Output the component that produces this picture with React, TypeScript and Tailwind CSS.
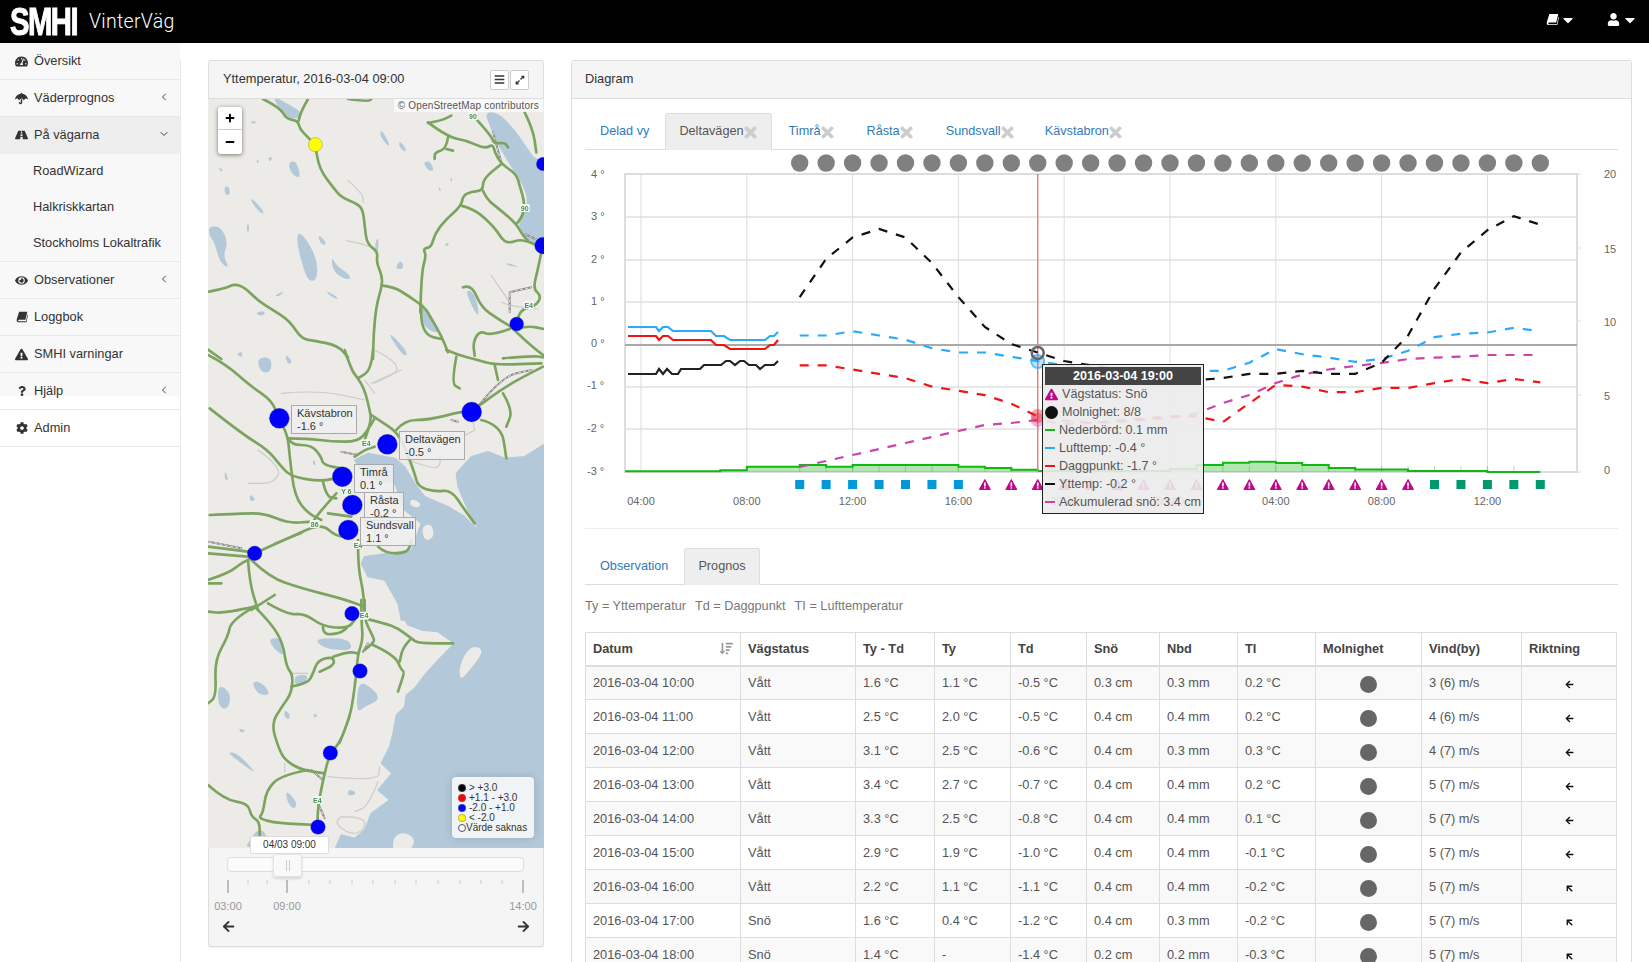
import React from "react";
import { ChevronLeft, ChevronDown } from "lucide-react";
import { FaTachometerAlt, FaUmbrella, FaRoad, FaEye, FaExclamationTriangle, FaQuestion, FaCog, FaUser, FaBars, FaExpandAlt, FaArrowLeft, FaArrowRight, FaSortAmountDown, FaCaretDown, FaTimes, FaPlus, FaMinus } from "react-icons/fa";

const X = (h: number) => 641 + 26.45 * (h - 4);
const Y = (v: number) => 344 - 42.6 * v;
const pts = (a: number[]) => { let s = ""; for (let i = 0; i < a.length; i += 2) s += (i ? " L" : "M") + a[i] + " " + a[i + 1]; return s; };
const smooth = (a: number[]) => {
  if (a.length < 6) return pts(a);
  let s = `M${a[0]} ${a[1]}`;
  for (let i = 2; i < a.length - 2; i += 2) s += ` Q${a[i]} ${a[i + 1]} ${(a[i] + a[i + 2]) / 2} ${(a[i + 1] + a[i + 3]) / 2}`;
  return s + ` L${a[a.length - 2]} ${a[a.length - 1]}`;
};
const smoothClosed = (a: number[]) => {
  const n = a.length;
  const m = (i: number) => [(a[i % n] + a[(i + 2) % n]) / 2, (a[(i + 1) % n] + a[(i + 3) % n]) / 2];
  let [x, y] = m(n - 2);
  let s = `M${x} ${y}`;
  for (let i = 0; i < n; i += 2) { [x, y] = m(i); s += ` Q${a[i]} ${a[i + 1]} ${x} ${y}`; }
  return s + " Z";
};
const seq = (vals: number[], f: (v: number) => number) => vals.map((v, i) => (i ? "L" : "M") + X(10 + i) + " " + f(v)).join(" ");

const yt = [1.1, 2.0, 2.5, 2.7, 2.5, 1.9, 1.1, 0.4, 0, -0.2, -0.4, -0.5, -0.6, -0.7, -0.8, -0.85, -0.8, -0.7, -0.7, -0.63, -0.7, -0.7, -0.44, 0.2, 1.3, 2.15, 2.67, 3.0, 2.8];
const lu = [0.2, 0.2, 0.3, 0.2, 0.1, -0.1, -0.2, -0.2, -0.3, -0.4, -0.5, -0.55, -0.6, -0.65, -0.65, -0.63, -0.63, -0.44, -0.12, -0.24, -0.32, -0.42, -0.35, -0.16, 0.16, 0.24, 0.27, 0.38, 0.3];
const da = [-0.5, -0.5, -0.6, -0.7, -0.8, -1.0, -1.1, -1.2, -1.4, -1.7, -1.8, -1.85, -1.8, -1.75, -1.7, -1.7, -1.83, -1.39, -0.96, -1.0, -1.13, -1.13, -1.03, -1.03, -0.92, -0.82, -0.92, -0.82, -0.9];
const sn = [467, 461, 455, 449, 443, 437, 431, 425, 423, 420, 424, 423, 422, 420, 418, 413.5, 403, 395, 383, 374.6, 369.5, 366, 363, 359, 357.6, 356.6, 355, 355, 355];
const steps: number[][] = [[3.4, 7, 471.3], [7, 8, 470.3], [8, 10, 466.7], [10, 11, 465], [11, 12, 466.7], [12, 16, 465], [16, 17, 466.7], [17, 18, 468], [18, 19, 469.7], [19, 24, 471], [24, 25, 469], [25, 26, 465], [26, 27, 462.7], [27, 28, 461.7], [28, 29, 463], [29, 30, 465], [30, 31, 468], [31, 33, 469.5], [33, 36, 471], [36, 38, 472]];
const hours = Array.from({ length: 29 }, (_, i) => 10 + i);

const roadsA: number[][] = [
  [165,0,215,25,235,60,270,65,275,90,300,115,322,138,330,190,345,225,375,265,400,295,450,315,465,335,470,380,477,435,510,458,505,490,522,530,522,560,505,620,497,700,495,780],
  [300,0,280,35,272,65],[420,0,480,8,490,0],
  [3,578,50,568,80,555,110,565,150,605,190,630,245,665,280,720,320,725,390,740,420,775],
  [0,752,40,780],
  [525,560,560,565,600,590,650,625,665,650,700,710,720,760],
  [640,620,637,660,655,710,700,720],
  [637,640,640,520,655,470,645,448,670,445,680,405,710,365,760,320,765,290,790,278,825,275,825,240,880,195],
  [760,320,800,330,860,385,885,425,905,432,940,420,990,440],
  [825,275,835,300,880,335,925,375,945,410,960,425],
  [660,70,720,115,780,125,830,150,855,135,860,160,880,195,925,225,935,260,950,310,945,350,925,375],
  [720,115,715,150,680,160,680,180],[715,150,735,155],
  [660,72,700,65,730,50],
  [800,55,850,110,858,135,890,130,900,145],
  [950,40,975,90,985,160],
  [1000,460,990,510,975,570,1000,590,985,620,940,630,925,670],
  [765,565,790,555,820,625,870,660,905,680,920,695,975,745,1008,770],
  [905,690,850,710,815,695,795,730,800,770],
  [925,690,960,680,1008,690],[885,778,970,770,1008,775],
];
const roadsB: number[][] = [
  [0,15,50,40,130,110,190,150,214,205,240,260,245,320,260,440,300,490,340,510],
  [5,175,100,250,180,300,220,350,250,380,340,395,400,380],
  [410,0,430,60,450,85,470,120,485,180,490,210,470,270],
  [240,265,250,285,310,285,340,320,345,345,400,355],
  [495,0,490,60,450,85],
  [490,195,520,215,565,245,590,290,620,370,630,410,680,425,730,420,770,480,800,520],
  [240,265,300,265,370,275,450,275,480,240,500,205],
  [565,240,590,210,660,210,760,185,790,185,890,110,1005,50],
  [820,210,880,225,895,325],[885,130,915,180,895,230],
  [715,0,750,15,810,30,860,45,1000,40],
  [745,20,730,100,755,115],[860,45,870,90],
  [345,395,355,440,385,445],
  [5,495,100,490,170,490,240,520,310,515],
  [140,610,250,560,340,520,385,560,430,560],
  [385,430,340,480,315,515],[360,490,430,500],
  [450,570,450,650,465,720,470,780],
  [0,590,120,605],[0,610,120,620],
  [120,630,125,700,150,780],[120,620,180,680,280,715,400,745,470,770],
  [0,690,60,670,100,640,120,630],[130,780,200,735],[0,700,40,700],
  [510,590,530,610,600,610,610,570],
  [440,320,470,300,500,290],
];
const roadsC: number[][] = [
  [460,0,460,60,465,120,450,160,445,220,435,300,425,350,395,430,365,460,345,540,330,620,328,680],
  [470,0,465,50,495,110,500,125,470,150],
  [470,55,530,70,570,85,610,115,630,130,735,130],
  [495,135,560,165,580,210,590,215,570,275],[610,115,585,140,575,185],
  [140,20,190,70,225,130,235,200,255,225,250,280,225,315,190,370,210,440,230,480,280,510,350,520],
  [140,20,70,60,60,110,20,180,25,290,0,310],[140,20,50,40,0,35],
  [180,10,240,45,290,40,345,80,420,85,440,60],
  [345,80,345,105,395,100,415,85],
  [250,260,300,250,315,220,330,180,375,170,380,195,335,215],
  [375,170,420,155,450,160],
  [300,510,220,525,175,570,165,640,150,655,210,670,330,675],
  [0,555,50,600,120,610,130,650,155,665,155,710],
];
const grayA: number[][] = [[415,425,470,435,510,455],[850,530,905,610],[420,245,465,285,465,310],[880,610,900,620,990,630]];
const grayB: number[][] = [[500,0,600,50,500,100],[220,130,330,120,470,150],[470,90,500,130],[600,330,680,360,700,340,690,300,800,240],[800,240,790,190],[580,60,490,100],[150,300,220,350,200,400,120,400]];
const grayC: number[][] = [[230,490,230,515],[360,530,510,545,515,500],[400,650,470,650,470,690,430,705,380,670,400,650],[510,545,480,620,440,635],[250,220,300,220]];
const darkA: number[][] = [[855,100,880,190],[950,405,1005,430],[905,580,970,565],[905,585,905,640]];
const darkB: number[][] = [[3,575,100,595],[200,580,280,550],[810,170,880,80,970,60],[400,305,450,315],[730,210,750,215]];
const darkC: number[][] = [[425,350,395,430],[480,130,465,155],[310,510,345,540],[335,620,350,655]];

const lakesA: number[][] = [
  [240,190,265,185,280,240,250,225],[265,410,280,400,325,470,330,540,300,550,275,470],[370,470,385,500,430,530,420,545,375,520],[330,405,355,430,350,440,335,430],
  [50,260,65,265,65,290,50,285],[3,380,40,385,60,430,45,470,65,510,35,490,20,430,3,410],[130,295,170,340,160,345,130,310],[145,182,155,185,148,195],[180,175,195,175,185,190],
  [520,90,545,135,540,142,515,110],[575,125,595,150,590,160,572,140],[645,190,665,185,680,215,660,215],[355,575,390,595,385,602,360,585],[198,590,230,575,215,592],[145,640,170,635,170,648,150,650],
  [560,510,578,480,590,510],[505,420,512,420,510,460,500,450],[640,600,655,640,700,700,670,700,640,670],[770,570,800,580,815,650,800,640],[545,700,600,760,590,775,550,720],[30,205,45,210,40,220],[120,365,125,400,115,395],[725,235,735,240,730,250],[690,262,700,270,695,280],[715,430,725,435,710,445],[890,490,940,505,900,500],[130,65,150,70,130,75],
];
const lakesB: number[][] = [[145,25,190,20,190,65,160,70],[50,360,62,390,50,390],[125,430,145,450,125,455],[315,325,325,345,315,345],[85,10,105,5,100,25],[230,10,255,35,240,45]];
const lakesC: number[][] = [[130,245,160,245,190,285,150,285],[30,250,70,280,60,330,30,320],[320,115,420,115,435,150,375,150,340,140],[180,115,225,115,230,170,200,150],[450,240,500,270,515,300,470,320,445,340],[55,455,90,460,150,525,100,490],[235,570,270,610,255,630,235,600],[420,565,450,580,420,590],[260,225,305,225,285,255,260,255],[90,385,115,390,100,400],[315,340,330,345,320,355],[115,735,150,685,175,700,180,742,120,742],[230,330,245,340,245,360,228,350]];

const Road = ({ d, c, w, dash }: { d: number[]; c: string; w: number; dash?: string }) => (
  <path d={smooth(d)} fill="none" stroke={c} strokeWidth={w} strokeLinejoin="round" strokeLinecap="round" strokeDasharray={dash} />
);
const Lake = ({ d }: { d: number[] }) => <path d={smoothClosed(d)} fill="#b3c9d9" />;
const Shield = ({ x, y, t }: { x: number; y: number; t: string }) => (
  <g>
    <rect x={x - 15} y={y - 12} width={30} height={24} rx={4} fill="#f4f8f2" />
    <text x={x} y={y + 8} textAnchor="middle" fontSize={21} fill="#4b8f55" fontWeight="bold">{t}</text>
  </g>
);
const Pin = ({ x, y, r, c = "#0000ff" }: { x: number; y: number; r: number; c?: string }) => (
  <circle cx={x} cy={y} r={r} fill={c} stroke="#555" strokeOpacity={0.45} strokeWidth={2} />
);
const Group = ({ oy, roads, gray, dark, lakes, children }: { oy: number; roads: number[][]; gray: number[][]; dark: number[][]; lakes: number[][]; children?: React.ReactNode }) => (
  <g transform={`translate(0 ${oy}) scale(${1 / 3})`}>
    {lakes.map((l, i) => <Lake key={i} d={l} />)}
    {gray.map((l, i) => <Road key={i} d={l} c="#cdcbc5" w={3.5} />)}
    {dark.map((l, i) => <g key={i}><Road d={l} c="#888" w={6} /><Road d={l} c="#ddd" w={3} dash="8 8" /></g>)}
    {roads.map((l, i) => <Road key={i} d={l} c="#7ca45f" w={8} />)}
    {children}
  </g>
);

const seaA = [830,40,870,40,920,90,960,150,985,185,1030,175,1030,480,970,430,940,400,930,370,950,340,960,300,940,250,900,190,860,120,845,80];
const seaB = [1030,270,950,320,890,325,840,305,790,320,745,370,750,410,780,480,815,545,770,500,720,470,650,440,620,400,590,350,560,325,480,310,440,330,470,380,560,400,590,480,640,520,610,600,540,610,470,620,460,640,480,680,530,690,570,760,580,810,1030,810];
const seaC = [580,-30,580,40,600,75,640,90,690,95,740,130,700,170,650,225,620,265,595,285,590,320,565,345,555,400,545,440,520,490,552,520,510,570,545,600,490,640,470,690,440,715,400,705,375,760,1030,760,1030,-30];

const MapDrawing = () => (
  <svg width={336} height={749} viewBox="0 0 336 749" className="block w-[336px] h-[749px] bg-[#ecebe7] blur-[0.35px]">
    <g transform={`scale(${1 / 3})`}>
      <path d={smoothClosed([195,-10,250,20,280,40,270,60,235,55,210,25])} fill="#b3c9d9" />
      <path d={smoothClosed(seaA)} fill="#b3c9d9" />
    </g>
    <g transform={`translate(0 251) scale(${1 / 3})`}>
      <path d={pts(seaB) + " Z"} fill="#b3c9d9" stroke="#b3c9d9" strokeWidth={4} strokeLinejoin="round" />
      <path d={smoothClosed([610,445,640,460,630,475,605,465])} fill="#ecebe7" />
      <path d={smoothClosed([640,530,670,520,680,560,650,575])} fill="#ecebe7" />
    </g>
    <g transform={`translate(0 501) scale(${1 / 3})`}>
      <path d={pts(seaC) + " Z"} fill="#b3c9d9" stroke="#b3c9d9" strokeWidth={4} strokeLinejoin="round" />
      <path d={smoothClosed([755,190,790,135,830,150,790,205,755,245])} fill="#ecebe7" />
      <path d={smoothClosed([555,710,590,695,625,720,600,760,555,760])} fill="#ecebe7" />
    </g>
    <Group oy={0} roads={roadsA} gray={grayA} dark={darkA} lakes={lakesA}>
      <Shield x={795} y={52} t="90" /><Shield x={950} y={327} t="90" /><Shield x={962} y={618} t="E4" />
      <Pin x={1005} y={195} r={20} /><Pin x={1005} y={440} r={25} /><Pin x={926} y={675} r={21} /><Pin x={322} y={137} r={21} c="#ffff00" />
    </Group>
    <Group oy={251} roads={roadsB} gray={grayB} dark={darkB} lakes={lakesB}>
      <Shield x={475} y={280} t="E4" /><Shield x={320} y={522} t="86" /><Shield x={450} y={585} t="E4" /><Shield x={415} y={425} t="Y 6" />
      <Pin x={214} y={205} r={30} /><Pin x={538} y={283} r={30} /><Pin x={791} y={186} r={30} /><Pin x={403} y={380} r={30} /><Pin x={433} y={465} r={30} /><Pin x={421} y={540} r={30} /><Pin x={140} y={610} r={22} />
    </Group>
    <Group oy={501} roads={roadsC} gray={grayC} dark={darkC} lakes={lakesC}>
      <Shield x={468} y={47} t="E4" /><Shield x={328} y={600} t="E4" />
      <Pin x={432} y={41} r={22} /><Pin x={456} y={213} r={22} /><Pin x={367} y={459} r={22} /><Pin x={330} y={681} r={22} />
    </Group>
  </svg>
);

const Book = ({ s }: { s: number }) => (
  <svg width={s} height={s} viewBox="0 0 14 14" fill="currentColor">
    <path d="M3.6 1 H13.2 L11 10.2 H3.4 C2.2 10.2 2.2 12 3.4 12 H11.6 L13.4 4 L14 4.6 L12.2 13 H3 C1.2 13 .4 11.4 .9 9.6 Z" />
  </svg>
);

const MapLabel = ({ cls, name, val }: { cls: string; name: string; val: string }) => (
  <div className={`absolute h-[29px] border border-[#aaa] bg-[#f0f0f0]/85 pl-[5px] text-[11px] leading-[13px] text-[#333] pt-px ${cls}`}>
    <div>{name}</div><div>{val}</div>
  </div>
);

const LegendRow = ({ c, t }: { c: string; t: string }) => (
  <div className="flex items-center h-[10px]">
    <span className={`w-2 h-2 rounded-full mr-[3px] border border-[#777]/50 ${c}`} /><span>{t}</span>
  </div>
);

const MapPanel = () => (
  <div className="w-[336px] h-[887px] border border-[#ddd] rounded-[3px] bg-[#f5f5f5] shadow-[0_1px_1px_rgba(0,0,0,0.05)] flex flex-col shrink-0">
    <div className="h-[38px] flex items-center justify-between border-b border-[#ddd] pl-[14px] pr-[14px] shrink-0">
      <span className="text-[12.8px] text-[#333] pb-[2px]">Yttemperatur, 2016-03-04 09:00</span>
      <div className="flex gap-px">
        <span className="w-[19px] h-[20px] border border-[#ccc] bg-white rounded-[2px] flex items-center justify-center text-[#333]"><FaBars size={11} /></span>
        <span className="w-[19px] h-[20px] border border-[#ccc] bg-white rounded-[2px] flex items-center justify-center text-[#333]"><FaExpandAlt size={10} /></span>
      </div>
    </div>
    <div className="relative h-[749px] shrink-0 -mx-px overflow-hidden">
      <MapDrawing />
      <div className="absolute top-0 right-[1px] bg-white/70 px-[4px] text-[10px] leading-[13px] tracking-[0.2px] text-[#555]">© OpenStreetMap contributors</div>
      <div className="absolute left-[10px] top-[8px] w-[24px] h-[47px] bg-white rounded-[3px] shadow-[0_1px_4px_rgba(0,0,0,0.5)] flex flex-col text-black">
        <span className="h-[23px] flex items-center justify-center border-b border-[#ccc]"><FaPlus size={10} /></span>
        <span className="h-[24px] flex items-center justify-center"><FaMinus size={10} /></span>
      </div>
      <MapLabel cls="left-[83px] top-[306px] w-[66px]" name="Kävstabron" val="-1.6 °" />
      <MapLabel cls="left-[191px] top-[332px] w-[66px]" name="Deltavägen" val="-0.5 °" />
      <MapLabel cls="left-[146px] top-[365px] w-[40px]" name="Timrå" val="0.1 °" />
      <MapLabel cls="left-[156px] top-[393px] w-[40px]" name="Råsta" val="-0.2 °" />
      <MapLabel cls="left-[152px] top-[418px] w-[56px]" name="Sundsvall" val="1.1 °" />
      <div className="absolute left-[244px] top-[678px] w-[82px] h-[61px] bg-[#f1f4f7] rounded-[4px] shadow-[0_0_10px_rgba(0,0,0,0.15)] pl-[6px] pt-[6px] text-[10px] text-[#333] leading-[10px]">
        <LegendRow c="bg-black" t="> +3.0" />
        <LegendRow c="bg-[#ff0000]" t="+1.1 - +3.0" />
        <LegendRow c="bg-[#0000ff]" t="-2.0 - +1.0" />
        <LegendRow c="bg-[#ffff00]" t="< -2.0" />
        <div className="flex items-center h-[10px]"><span className="w-2 h-2 rounded-full border border-[#555] bg-white/20" /><span>Värde saknas</span></div>
      </div>
    </div>
    <div className="relative flex-1 -mx-px">
      <div className="absolute left-[42px] -top-[12px] w-[79px] h-[18px] bg-white border border-[#ddd] rounded-[2px] text-[10px] leading-[16px] text-center text-[#333] z-10">04/03 09:00</div>
      <div className="relative ml-[19px] mt-[9px] w-[297px] h-[15px] bg-[#fbfbfb] border border-[#ddd] rounded-[4px]">
        <div className="absolute left-[45px] -top-[4px] w-[29px] h-[23px] bg-[#f9f9f9] border border-[#e4e4e4] rounded-[3px] shadow-[0_2px_3px_rgba(0,0,0,0.12)] flex items-center justify-center gap-[2px]">
          <span className="w-px h-[11px] bg-[#ccc]" /><span className="w-px h-[11px] bg-[#ccc]" />
        </div>
      </div>
      <svg width={336} height={46} viewBox="0 0 336 46" className="block mt-[8px]">
        {[40, 59, 101, 122, 144, 165, 187, 208, 230, 252, 273, 294].map((x) => <line key={x} x1={x} x2={x} y1={0} y2={4} stroke="#ccc" />)}
        {[20, 79, 315].map((x) => <line key={x} x1={x} x2={x} y1={0} y2={13} stroke="#aaa" strokeWidth={1.5} />)}
        <text x={20} y={30} textAnchor="middle" fontSize={11} fill="#999">03:00</text>
        <text x={79} y={30} textAnchor="middle" fontSize={11} fill="#999">09:00</text>
        <text x={315} y={30} textAnchor="middle" fontSize={11} fill="#999">14:00</text>
      </svg>
      <div className="flex justify-between pl-[14px] pr-[14px] text-[#333] -mt-[6px]">
        <FaArrowLeft size={13} /><FaArrowRight size={13} />
      </div>
    </div>
  </div>
);

const Tab = ({ t, x, active, cls = "px-[14px] mr-[2px]" }: { t: string; x?: boolean; active?: boolean; cls?: string }) => (
  <div className={`h-[37px] -mb-px flex items-center text-[12.7px] rounded-t-[3px] border ${cls} ${active ? "bg-[#eee] border-[#ddd] border-b-[#eee] text-[#555]" : "border-transparent text-[#337ab7]"}`}>
    <span>{t}</span>
    {x && <FaTimes size={17} stroke="currentColor" strokeWidth={20} className="text-[#ccc] mt-[2px] -mx-[2px]" />}
  </div>
);

const Tri = ({ x, y }: { x: number; y: number }) => (
  <g>
    <path d={`M${x} ${y - 5.5} L${x + 5.5} ${y + 4.5} L${x - 5.5} ${y + 4.5} Z`} fill="#bb0a8c" stroke="#bb0a8c" strokeLinejoin="round" />
    <rect x={x - 0.8} y={y - 2.5} width={1.6} height={4} fill="#fff" /><rect x={x - 0.8} y={y + 2.2} width={1.6} height={1.4} fill="#fff" />
  </g>
);

const blueObs = [628,327,656,327,659,331,663,327,668,327,673,331,711,331,716,336,724,336,730,340,765,340,770,336,774,336,778,332];
const redObs = [628,336,656,336,659,340,663,336,668,336,673,340,711,340,716,345,724,345,730,349,765,349,770,345,774,345,778,340];
const blackObs = [628,374,656,374,659,369,663,374,667,369,672,374,678,374,681,369,700,369,704,365,721,365,726,361,730,361,735,365,740,361,744,361,749,365,756,365,760,369,765,365,774,365,778,361];

const Chart = () => {
  const stepD = steps.map((s, i) => (i ? "L" : "M") + Math.max(X(s[0]), 625) + " " + s[2] + " L" + X(s[1]) + " " + s[2]).join(" ");
  return (
    <svg width={1046} height={378} viewBox="585 150 1046 378" className="block w-[1046px] h-[378px]">
      {[217, 260, 302, 387, 429].map((y) => <line key={y} x1={625} x2={1577} y1={y} y2={y} stroke="#e8e8e8" strokeWidth={2} />)}
      {[4, 8, 12, 16, 20, 24, 28, 32, 36].map((h) => <line key={h} x1={X(h)} x2={X(h)} y1={174} y2={472} stroke="#ddd" />)}
      <rect x={625} y={174} width={952} height={298} fill="none" stroke="#ddd" strokeWidth={2} />
      <line x1={625} x2={1577} y1={345} y2={345} stroke="#aaa" strokeWidth={2} />
      {[174, 248, 321, 395, 472].map((y) => <line key={y} x1={1577} x2={1581} y1={y} y2={y} stroke="#ddd" />)}
      {["4 °", "3 °", "2 °", "1 °", "0 °"].map((t, i) => <text key={t} x={591} y={178 + i * 42.3} fontSize={11} fill="#666">{t}</text>)}
      {["-1 °", "-2 °", "-3 °"].map((t, i) => <text key={t} x={587} y={389 + i * 43} fontSize={11} fill="#666">{t}</text>)}
      {[["20", 178], ["15", 253], ["10", 326], ["5", 400], ["0", 474]].map(([t, y]) => <text key={t as string} x={1604} y={y as number} fontSize={11} fill="#666">{t}</text>)}
      {hours.map((h) => <circle key={h} cx={X(h)} cy={163} r={8.7} fill="#808080" />)}
      <path d={stepD + ` L${X(38)} 472 L625 472 Z`} fill="#16b616" fillOpacity={0.33} stroke="none" />
      <path d={stepD} fill="none" stroke="#11b811" strokeWidth={2} />
      {hours.slice(0, 28).map((h) => <line key={h} x1={X(h)} x2={X(h)} y1={466} y2={472} stroke="#11b811" strokeOpacity={0.35} />)}
      <line x1={X(19)} x2={X(19)} y1={174} y2={472} stroke="#d98888" strokeWidth={1.5} />
      <path d={pts(blueObs)} fill="none" stroke="#29aaff" strokeWidth={2.2} />
      <path d={pts(redObs)} fill="none" stroke="#f01414" strokeWidth={2.2} />
      <path d={pts(blackObs)} fill="none" stroke="#222" strokeWidth={2.2} />
      <path d={sn.map((y, i) => (i ? "L" : "M") + X(10 + i) + " " + y).join(" ")} fill="none" stroke="#cc44aa" strokeWidth={2.2} strokeDasharray="9 9" />
      <path d={seq(da, Y)} fill="none" stroke="#f01414" strokeWidth={2.2} strokeDasharray="9 9" />
      <path d={seq(lu, Y)} fill="none" stroke="#29aaff" strokeWidth={2.2} strokeDasharray="9 9" />
      <path d={seq(yt, Y)} fill="none" stroke="#111" strokeWidth={2.2} strokeDasharray="9 9" />
      <circle cx={X(19)} cy={361.5} r={6.5} fill="#29aaff" fillOpacity={0.3} stroke="#29aaff" strokeOpacity={0.7} strokeWidth={2} />
      <circle cx={X(19)} cy={353} r={6} fill="none" stroke="#666" strokeWidth={2.5} />
      <circle cx={X(19)} cy={420} r={7} fill="#cc44aa" fillOpacity={0.4} />
      <circle cx={X(19)} cy={416} r={7} fill="#f01414" fillOpacity={0.4} />
      {hours.map((h) => h <= 16
        ? <rect key={h} x={X(h) - 4.5} y={480} width={9} height={9} fill="#0098d8" />
        : h <= 33 ? <Tri key={h} x={X(h)} y={485} />
        : <rect key={h} x={X(h) - 4.5} y={480} width={9} height={9} fill="#00986e" />)}
      {[[4, "04:00"], [8, "08:00"], [12, "12:00"], [16, "16:00"], [20, "20:00"], [24, "00:00"], [28, "04:00"], [32, "08:00"], [36, "12:00"]].map(([h, t]) => (
        <text key={h as number} x={X(h as number)} y={505} textAnchor="middle" fontSize={11} fill="#666">{t}</text>
      ))}
    </svg>
  );
};

const TipRow = ({ icon, t }: { icon: React.ReactNode; t: string }) => (
  <div className="h-[18px] flex items-center whitespace-nowrap">{icon}<span>{t}</span></div>
);
const Swatch = ({ c }: { c: string }) => <span className={`w-[10px] h-[2px] mr-[4px] ${c}`} />;

const Tooltip = () => (
  <div className="absolute left-[457px] top-[214px] w-[162px] h-[150px] border-[1.5px] border-[#222] bg-[#ebebeb]/90 px-[2px] pt-[2px] text-[12.6px] leading-[18px] text-[#555]">
    <div className="h-[18px] bg-[#444] text-white font-bold text-center leading-[18px]">2016-03-04 19:00</div>
    <div className="flex flex-col">
      <TipRow icon={<FaExclamationTriangle size={13} className="text-[#bb0a8c] mr-[4px]" />} t="Vägstatus: Snö" />
      <TipRow icon={<span className="w-[13px] h-[13px] rounded-full bg-[#111] mr-[4px]" />} t="Molnighet: 8/8" />
      <TipRow icon={<Swatch c="bg-[#11b811]" />} t="Nederbörd: 0.1 mm" />
      <TipRow icon={<Swatch c="bg-[#29aaff]" />} t="Lufttemp: -0.4 °" />
      <TipRow icon={<Swatch c="bg-[#f01414]" />} t="Daggpunkt: -1.7 °" />
      <TipRow icon={<Swatch c="bg-[#111]" />} t="Yttemp: -0.2 °" />
      <TipRow icon={<Swatch c="bg-[#cc44aa]" />} t="Ackumulerad snö: 3.4 cm" />
    </div>
  </div>
);

const rows: string[][] = [
  ["2016-03-04 10:00", "Vått", "1.6 °C", "1.1 °C", "-0.5 °C", "0.3 cm", "0.3 mm", "0.2 °C", "3 (6) m/s", "w"],
  ["2016-03-04 11:00", "Vått", "2.5 °C", "2.0 °C", "-0.5 °C", "0.4 cm", "0.4 mm", "0.2 °C", "4 (6) m/s", "w"],
  ["2016-03-04 12:00", "Vått", "3.1 °C", "2.5 °C", "-0.6 °C", "0.4 cm", "0.3 mm", "0.3 °C", "4 (7) m/s", "w"],
  ["2016-03-04 13:00", "Vått", "3.4 °C", "2.7 °C", "-0.7 °C", "0.4 cm", "0.4 mm", "0.2 °C", "5 (7) m/s", "w"],
  ["2016-03-04 14:00", "Vått", "3.3 °C", "2.5 °C", "-0.8 °C", "0.4 cm", "0.4 mm", "0.1 °C", "5 (7) m/s", "w"],
  ["2016-03-04 15:00", "Vått", "2.9 °C", "1.9 °C", "-1.0 °C", "0.4 cm", "0.4 mm", "-0.1 °C", "5 (7) m/s", "w"],
  ["2016-03-04 16:00", "Vått", "2.2 °C", "1.1 °C", "-1.1 °C", "0.4 cm", "0.4 mm", "-0.2 °C", "5 (7) m/s", "nw"],
  ["2016-03-04 17:00", "Snö", "1.6 °C", "0.4 °C", "-1.2 °C", "0.4 cm", "0.3 mm", "-0.2 °C", "5 (7) m/s", "nw"],
  ["2016-03-04 18:00", "Snö", "1.4 °C", "-", "-1.4 °C", "0.2 cm", "0.2 mm", "-0.3 °C", "5 (7) m/s", "nw"],
];
const heads = ["Datum", "Vägstatus", "Ty - Td", "Ty", "Td", "Snö", "Nbd", "TI", "Molnighet", "Vind(by)", "Riktning"];

const DataTable = () => (
  <table className="table-fixed w-[1031px] border-collapse text-[12.8px]">
    <colgroup>
      <col className="w-[155px]" /><col className="w-[115px]" /><col className="w-[79px]" /><col className="w-[76px]" /><col className="w-[76px]" /><col className="w-[73px]" /><col className="w-[78px]" /><col className="w-[78px]" /><col className="w-[106px]" /><col className="w-[100px]" /><col className="w-[95px]" />
    </colgroup>
    <thead>
      <tr>
        {heads.map((h, i) => (
          <th key={h} className="h-[33px] px-[7px] text-left font-bold text-[#444] border border-[#ddd] border-b-2">
            {i === 0 ? <span className="flex items-center justify-between">{h}<FaSortAmountDown size={13} className="text-[#999]" /></span> : h}
          </th>
        ))}
      </tr>
    </thead>
    <tbody>
      {rows.map((r, i) => (
        <tr key={i} className={i % 2 === 0 ? "bg-[#f9f9f9]" : "bg-white"}>
          {r.slice(0, 8).map((c, j) => <td key={j} className="h-[34px] px-[7px] text-[#555] border border-[#ddd]">{c}</td>)}
          <td className="h-[34px] border border-[#ddd]"><span className="block w-[17px] h-[17px] rounded-full bg-[#666] mx-auto mt-[3px]" /></td>
          <td className="h-[34px] px-[7px] text-[#555] border border-[#ddd]">{r[8]}</td>
          <td className="h-[34px] border border-[#ddd]">
            <span className="flex justify-center mt-[3px] text-[#111]"><FaArrowLeft size={9} className={r[9] === "nw" ? "rotate-45" : ""} /></span>
          </td>
        </tr>
      ))}
    </tbody>
  </table>
);

const DiagramPanel = () => (
  <div className="w-[1061px] border border-[#ddd] rounded-[3px] bg-white shrink-0">
    <div className="h-[38px] bg-[#f5f5f5] border-b border-[#ddd] flex items-center pl-[13px] pb-[2px] text-[12.8px] text-[#333]">Diagram</div>
    <div className="px-[13px] pt-[14px]">
      <div className="flex border-b border-[#ddd] h-[37px]">
        <Tab t="Delad vy" cls="px-[14px] mr-[1px]" />
        <Tab t="Deltavägen" x active cls="pl-[13px] pr-[14px] mr-[2px]" />
        <Tab t="Timrå" x cls="pl-[14px] pr-[15px] mr-[2px]" />
        <Tab t="Råsta" x cls="pl-[14px] pr-[15px] mr-[2px]" />
        <Tab t="Sundsvall" x cls="pl-[14px] pr-[13px] mr-[2px]" />
        <Tab t="Kävstabron" x />
      </div>
      <div className="relative">
        <Chart />
        <Tooltip />
      </div>
      <div className="border-t border-[#eee] pt-[19px]">
        <div className="flex border-b border-[#ddd] h-[37px]">
          <Tab t="Observation" cls="pl-[14px] pr-[13px] mr-[2px]" />
          <Tab t="Prognos" active cls="px-[13px] mr-[2px]" />
        </div>
        <div className="pt-[14px] pb-[18px] text-[12.7px] leading-[15px] text-[#777] flex gap-[9px]">
          <span>Ty = Yttemperatur</span><span>Td = Daggpunkt</span><span>TI = Lufttemperatur</span>
        </div>
        <DataTable />
      </div>
    </div>
  </div>
);

const Item = ({ icon, t, arrow, active, sub, cls }: { icon?: React.ReactNode; t: string; arrow?: "l" | "d"; active?: boolean; sub?: boolean; cls?: string }) => (
  <div className={`flex items-center text-[12.8px] text-[#333] ${sub ? "h-[36px] pl-[33px] pb-[2px]" : "h-[37px] border-b border-[#e7e7e7] pl-[15px]"} pr-[10px] ${active ? "bg-[#eee] pb-[2px]" : "bg-[#f8f8f8]"} ${cls ?? ""}`}>
    {icon && <span className="w-[13px] mr-[6px] flex justify-center">{icon}</span>}
    <span className="flex-1">{t}</span>
    {arrow === "l" && <ChevronLeft size={12} strokeWidth={2} className="text-[#444] -mt-[2px]" />}
    {arrow === "d" && <ChevronDown size={12} strokeWidth={2} className="text-[#444] -mt-[2px]" />}
  </div>
);

const Sidebar = () => (
  <div className="w-[180px] shrink-0">
    <Item icon={<FaTachometerAlt size={13} />} t="Översikt" />
    <Item icon={<FaUmbrella size={13} />} t="Väderprognos" arrow="l" />
    <Item icon={<FaRoad size={14} />} t="På vägarna" arrow="d" active cls="!border-b-0" />
    <Item t="RoadWizard" sub />
    <Item t="Halkriskkartan" sub />
    <Item t="Stockholms Lokaltrafik" sub cls="border-b border-[#e7e7e7]" />
    <Item icon={<FaEye size={13} />} t="Observationer" arrow="l" />
    <Item icon={<Book s={12} />} t="Loggbok" />
    <Item icon={<FaExclamationTriangle size={13} />} t="SMHI varningar" />
    <Item icon={<FaQuestion size={10} />} t="Hjälp" arrow="l" cls="bg-[linear-gradient(#f8f8f8_23px,#ffffff_23px)]" />
    <Item icon={<FaCog size={12} />} t="Admin" cls="!bg-white" />
  </div>
);

const Nav = () => (
  <div className="h-[43px] bg-black flex items-center justify-between text-white shrink-0">
    <div className="flex items-center">
      <span className="block w-[68px] ml-[10px] origin-left scale-x-[0.77] text-[38px] leading-[38px] font-bold tracking-[-2px] [-webkit-text-stroke:1px_white] whitespace-nowrap">SMHI</span>
      <span className="ml-[11px] font-['Roboto',sans-serif] font-light text-[19.5px] tracking-[0.3px]">VinterVäg</span>
    </div>
    <div className="flex items-center pr-[11px] pb-[4px]">
      <Book s={13} /><FaCaretDown size={16} className="ml-[1px]" />
      <FaUser size={13} className="ml-[31px]" /><FaCaretDown size={16} className="ml-[2px]" />
    </div>
  </div>
);

export default function App() {
  return (
    <div className="w-[1649px] h-[962px] overflow-hidden flex flex-col bg-white font-['Liberation_Sans',Arial,sans-serif]">
      <Nav />
      <div className="flex flex-1 min-h-0">
        <Sidebar />
        <div className="flex-1 mt-[17px] border-l border-[#e7e7e7] pl-[27px] flex gap-[27px] items-start">
          <MapPanel />
          <DiagramPanel />
        </div>
      </div>
    </div>
  );
}
